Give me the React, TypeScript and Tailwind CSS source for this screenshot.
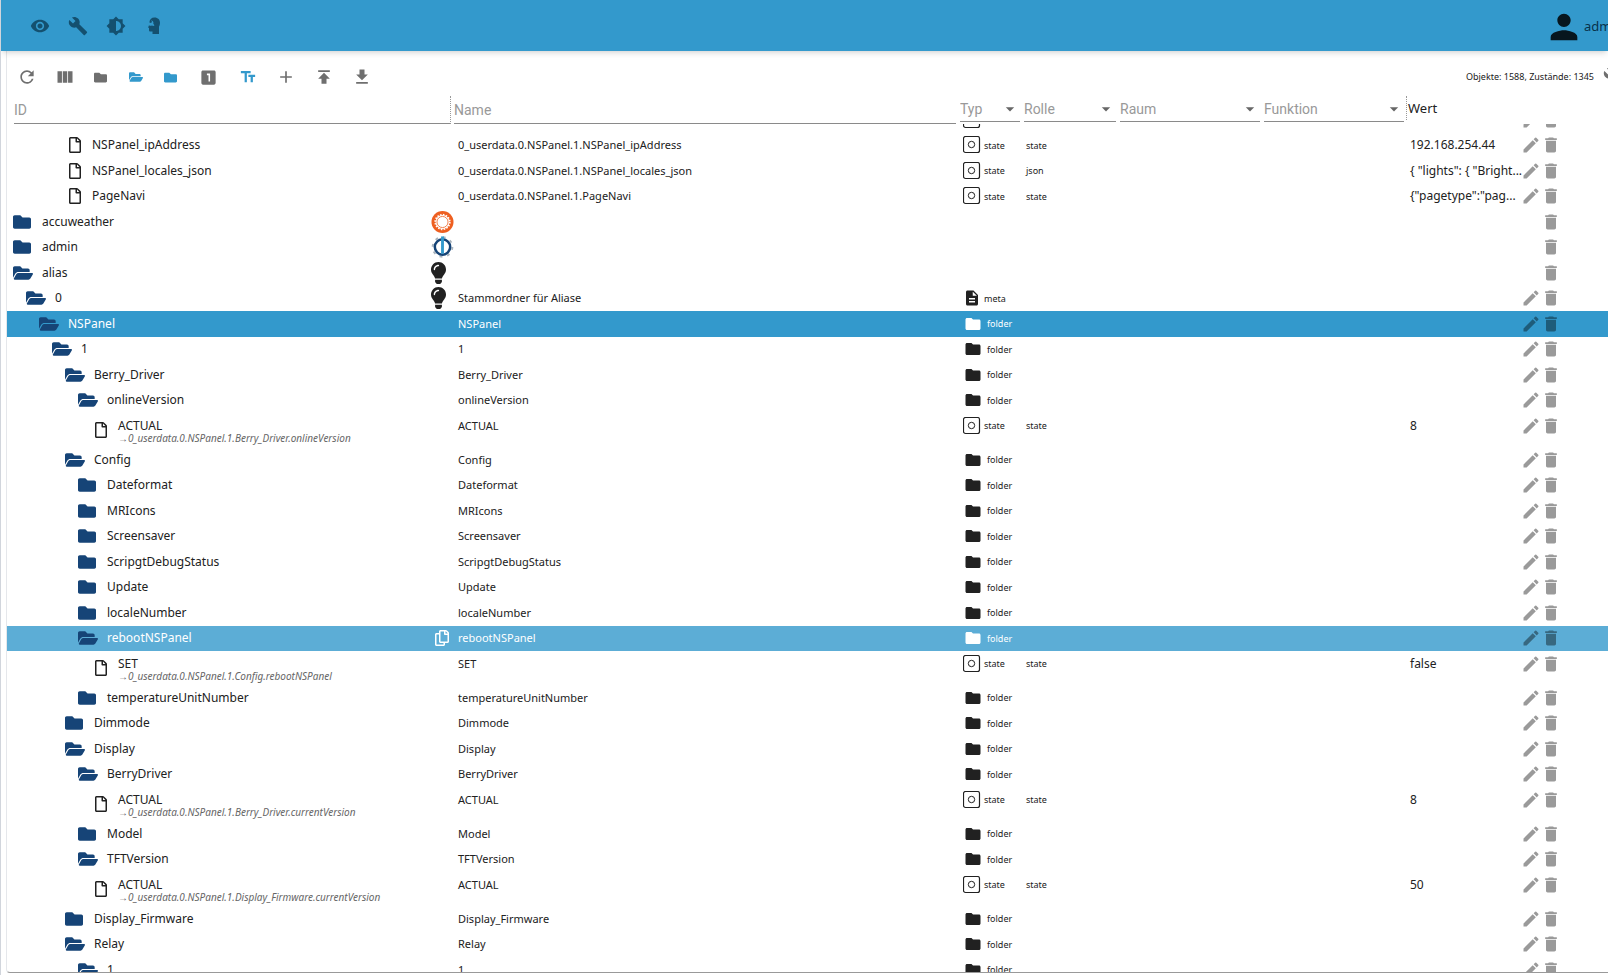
import React from "react";
import {
  FaFolder,
  FaFolderOpen,
  FaLightbulb,
  FaRegCopy,
  FaRegFile,
} from "react-icons/fa";
import {
  MdAdd,
  MdArrowDropDown,
  MdBrightness6,
  MdBuild,
  MdDelete,
  MdDescription,
  MdEdit,
  MdFolder,
  MdLooksOne,
  MdPerson,
  MdRefresh,
  MdTextFields,
  MdViewColumn,
  MdVisibility,
  MdFileDownload,
  MdPublish,
} from "react-icons/md";

type Row = {
  id: string;
  level: number;
  kind: "open" | "closed" | "file" | "none";
  name?: string;
  type?: "state" | "folder" | "meta";
  role?: string;
  value?: string;
  alias?: string;
  icon?: "sun" | "iobroker" | "bulb" | "copy";
  tone?: "selected" | "hover";
};

const closed = (id: string, level: number): Row => ({ id, level, kind: "closed", name: id, type: "folder" });
const open = (id: string, level: number): Row => ({ id, level, kind: "open", name: id, type: "folder" });
const state = (id: string, value: string, alias: string): Row => ({
  id,
  level: 6,
  kind: "file",
  name: id,
  type: "state",
  role: "state",
  value,
  alias,
});
const data = (id: string, role: string, value: string): Row => ({
  id,
  level: 4,
  kind: "file",
  name: `0_userdata.0.NSPanel.1.${id}`,
  type: "state",
  role,
  value,
});

const rows: Row[] = [
  { id: "", level: 4, kind: "none", type: "state" },
  data("NSPanel_ipAddress", "state", "192.168.254.44"),
  data("NSPanel_locales_json", "json", '{ "lights": { "Bright...'),
  data("PageNavi", "state", '{"pagetype":"pag...'),
  { id: "accuweather", level: 0, kind: "closed", icon: "sun" },
  { id: "admin", level: 0, kind: "closed", icon: "iobroker" },
  { id: "alias", level: 0, kind: "open", icon: "bulb" },
  { id: "0", level: 1, kind: "open", icon: "bulb", name: "Stammordner für Aliase", type: "meta" },
  { ...open("NSPanel", 2), tone: "selected" },
  open("1", 3),
  open("Berry_Driver", 4),
  open("onlineVersion", 5),
  state("ACTUAL", "8", "0_userdata.0.NSPanel.1.Berry_Driver.onlineVersion"),
  open("Config", 4),
  closed("Dateformat", 5),
  closed("MRIcons", 5),
  closed("Screensaver", 5),
  closed("ScripgtDebugStatus", 5),
  closed("Update", 5),
  closed("localeNumber", 5),
  { ...open("rebootNSPanel", 5), icon: "copy", tone: "hover" },
  state("SET", "false", "0_userdata.0.NSPanel.1.Config.rebootNSPanel"),
  closed("temperatureUnitNumber", 5),
  closed("Dimmode", 4),
  open("Display", 4),
  open("BerryDriver", 5),
  state("ACTUAL", "8", "0_userdata.0.NSPanel.1.Berry_Driver.currentVersion"),
  closed("Model", 5),
  open("TFTVersion", 5),
  state("ACTUAL", "50", "0_userdata.0.NSPanel.1.Display_Firmware.currentVersion"),
  closed("Display_Firmware", 4),
  open("Relay", 4),
  open("1", 5),
];

const HeadIcon = () => (
  <svg viewBox="0 0 20 20" className="size-5" fill="currentColor">
    <path d="M10.500 1.500C14 1.500 16 3.800 16 6.800c0 2-.6 3-1 4V18H8.500v-2.500H6.500c-1 0-1.500-.5-1.500-1.500v-2.200H4l1-2.600c.8.6 2 .7 2.900.2l1.600.7 1-.9-1.200-1.400c.6-1.700-.5-3.400-2.300-3.600l1 1.500-.9 1.200-1.700-.4C5.500 3.500 7.300 1.500 10.500 1.500Z" />
  </svg>
);

const SunIcon = () => (
  <svg viewBox="0 0 24 24" className="size-6">
    <circle cx="12" cy="12" r="11.500" fill="#ee5f20" />
    <circle cx="12" cy="12" r="7.200" fill="#fff" />
    <circle cx="12" cy="12" r="7.600" fill="none" stroke="#fff" strokeWidth="1.800" strokeDasharray="1.600 1.400" />
    <circle cx="12" cy="12" r="5.800" fill="#fff" stroke="#ee7a45" />
  </svg>
);

const IoBrokerIcon = () => (
  <svg viewBox="0 0 24 24" className="size-6" fill="none">
    <circle cx="12" cy="12" r="10.300" stroke="#a9b4be" strokeWidth="2" strokeDasharray="3 5.090" />
    <circle cx="12" cy="12" r="8" fill="#fff" stroke="#164477" strokeWidth="2.600" />
    <path d="M12 1v18" stroke="#3399cc" strokeWidth="3" />
  </svg>
);

const StateIcon = () => (
  <svg viewBox="0 0 18 18" className="size-[18px]" fill="none" stroke="currentColor">
    <rect x="0.500" y="0.500" width="16" height="16" rx="2" strokeWidth="1.200" />
    <circle cx="8.500" cy="8.500" r="3.200" />
  </svg>
);

const TreeIcon = ({ kind }: { kind: Row["kind"] }) => {
  if (kind === "none") return null;
  if (kind === "file") {
    return <FaRegFile className="ml-1 mr-[11px] h-4 w-3 shrink-0" />;
  }
  if (kind === "open") {
    return <FaFolderOpen className="mr-[9px] h-[18px] w-5 shrink-0 text-[#164477]" />;
  }
  return <FaFolder className="mr-[11px] size-[18px] shrink-0 text-[#164477]" />;
};

const RowIcon = ({ icon }: { icon: Row["icon"] }) => {
  if (icon === "sun") return <SunIcon />;
  if (icon === "iobroker") return <IoBrokerIcon />;
  if (icon === "bulb") return <FaLightbulb className="h-[22px] w-[15px]" />;
  if (icon === "copy") return <FaRegCopy className="ml-[3px] size-4" />;
  return null;
};

const TypeCell = ({ type }: { type: Row["type"] }) => {
  if (!type) return null;
  return (
    <>
      {type === "state" && <StateIcon />}
      {type === "meta" && <MdDescription className="size-[18px]" />}
      {type === "folder" && <MdFolder className="mr-[2px] ml-px size-[18px]" />}
      <span className="ml-[3px]">{type}</span>
    </>
  );
};

const TreeRow = ({ row }: { row: Row }) => {
  let tone = "text-[#212121]";
  if (row.tone === "selected") tone = "bg-[#3399cc] text-white";
  if (row.tone === "hover") tone = "bg-[#5cadd6] text-white";
  const height = row.alias ? "h-[34px]" : "h-[1.7em]";
  const line = "flex h-[1.7em] items-center";
  const button = row.tone ? "text-black/40" : "text-[#9a9a9a]";

  return (
    <tr className={`flex shrink-0 first:-mt-[17px] ${height} ${tone}`}>
      <td className="flex w-[447px] shrink-0">
        <div
          className={`flex min-w-0 flex-1 ${row.alias ? "items-center" : line}`}
          style={{ paddingLeft: 6 + row.level * 13 }}
        >
          <TreeIcon kind={row.kind} />
          {row.alias ? (
            <div className="pt-1 text-[12px] leading-3 whitespace-nowrap">
              {row.id}
              <div className="text-[10px] text-[#666] italic">→{row.alias}</div>
            </div>
          ) : (
            <div className="text-[12px] leading-4 whitespace-nowrap">{row.id}</div>
          )}
        </div>
        <div className={`${line} w-[23px] shrink-0`}>
          <RowIcon icon={row.icon} />
        </div>
      </td>
      <td className="min-w-0 flex-1">
        <div className={line}>
          <span className="pl-1 text-[11px]">{row.name}</span>
        </div>
      </td>
      <td className="w-16 shrink-0">
        <div className={line}>
          <span className="flex items-center pl-[3px] text-[9px]">
            <TypeCell type={row.type} />
          </span>
        </div>
      </td>
      <td className="w-24 shrink-0">
        <div className={line}>
          <span className="pl-[2px] text-[9px]">{row.role}</span>
        </div>
      </td>
      <td className="w-36 shrink-0" />
      <td className="w-36 shrink-0" />
      <td className="w-28 shrink-0">
        <div className={line}>
          <span className="pl-[2px] text-[12px] whitespace-nowrap">{row.value}</span>
        </div>
      </td>
      <td className="w-[88px] shrink-0">
        <div className={`${line} ${button}`}>
          <span className="flex w-[21px] justify-end">
            {row.type && (
              <button aria-label="Edit">
                <MdEdit className="size-5" />
              </button>
            )}
          </span>
          <button aria-label="Delete">
            <MdDelete className="size-5" />
          </button>
        </div>
      </td>
    </tr>
  );
};

const TextFilter = ({ label, className }: { label: string; className: string }) => (
  <th className={className}>
    <input
      aria-label={label}
      placeholder={label}
      className="block h-7 w-full border-b border-[#8a8a8a] font-[Roboto,sans-serif] text-sm font-normal outline-none placeholder:text-[#999]"
    />
  </th>
);

const SelectFilter = ({ label, className }: { label: string; className: string }) => (
  <th className={`relative shrink-0 pr-1 ${className}`}>
    <select
      aria-label={label}
      className="block h-[26px] w-full appearance-none border-b border-[#8a8a8a] font-[Roboto,sans-serif] text-sm font-normal text-[#999] outline-none"
    >
      <option>{label}</option>
    </select>
    <MdArrowDropDown className="pointer-events-none absolute top-[3px] right-1 size-5 text-[#666]" />
  </th>
);

const tools = [
  { label: "Refresh", icon: <MdRefresh className="size-5" />, className: "w-[38px] text-[#6f6f6f]" },
  { label: "Columns", icon: <MdViewColumn className="size-5" />, className: "w-[37px] text-[#6f6f6f]" },
  { label: "Collapse all", icon: <FaFolder className="size-[13px]" />, className: "w-[35px] text-[#6f6f6f]" },
  { label: "Expand all", icon: <FaFolderOpen className="size-[14px]" />, className: "w-[36px] text-[#3399cc]" },
  { label: "Collapse one", icon: <FaFolder className="size-[13px]" />, className: "w-[33px] text-[#3399cc]" },
  { label: "Expand one", icon: <MdLooksOne className="size-[19px]" />, className: "w-[43px] text-[#6f6f6f]" },
  { label: "Show names", icon: <MdTextFields className="size-[18px]" />, className: "w-[36px] text-[#3399cc]" },
  { label: "Add object", icon: <MdAdd className="size-5" />, className: "w-[39px] text-[#6f6f6f]" },
  { label: "Upload", icon: <MdPublish className="size-5" />, className: "w-[38px] text-[#6f6f6f]" },
  { label: "Download", icon: <MdFileDownload className="size-5" />, className: "w-[37px] text-[#6f6f6f]" },
];

const App = () => {
  return (
    <div className="flex h-screen flex-col overflow-hidden border-l border-gray-300 bg-white font-['Noto_Sans',sans-serif] text-[#212121]">
      <header className="z-10 flex h-[51px] shrink-0 items-center bg-[#3399cc] pl-[29px] shadow-md">
        <div className="flex flex-1 items-center gap-[18px] text-[#14506f]">
          <button aria-label="Visibility">
            <MdVisibility className="size-5" />
          </button>
          <button aria-label="System settings">
            <MdBuild className="size-5" />
          </button>
          <button aria-label="Theme">
            <MdBrightness6 className="size-5" />
          </button>
          <button aria-label="Expert mode">
            <HeadIcon />
          </button>
        </div>
        <button className="flex w-16 shrink-0 items-center overflow-hidden pt-[2px] text-[13px] text-[#08324a]">
          <MdPerson className="size-10 shrink-0 text-[#07161e]" />
          <span>admin</span>
        </button>
      </header>

      <main className="mb-[2px] ml-[5px] flex min-h-0 flex-1 flex-col rounded-bl border-b border-l border-b-[#999] border-l-gray-200">
        <div className="flex h-[45px] shrink-0 items-center overflow-hidden pt-[7px] pl-px">
          {tools.map((tool) => (
            <button
              key={tool.label}
              aria-label={tool.label}
              className={`flex justify-center ${tool.className}`}
            >
              {tool.icon}
            </button>
          ))}
          <span className="ml-auto mr-[9px] text-[9px]">Objekte: 1588, Zustände: 1345</span>
          <button aria-label="Tools" className="-mr-[15px] shrink-0 text-[#6f6f6f]">
            <MdBuild className="size-5" />
          </button>
        </div>

        <table className="flex min-h-0 flex-1 flex-col text-left">
          <thead>
            <tr className="flex h-7 items-start">
              <TextFilter label="ID" className="w-[443px] pl-[7px]" />
              <TextFilter label="Name" className="min-w-0 flex-1 border-l border-dotted border-[#999] pr-1 pl-[3px]" />
              <SelectFilter label="Typ" className="w-16" />
              <SelectFilter label="Rolle" className="w-24" />
              <SelectFilter label="Raum" className="w-36" />
              <SelectFilter label="Funktion" className="w-36" />
              <th className="-ml-[2px] w-[114px] border-l border-dotted border-[#999] pl-px text-[13px] leading-6 font-normal">
                Wert
              </th>
              <th className="w-[88px]" />
            </tr>
          </thead>
          <tbody className="flex min-h-0 flex-1 flex-col overflow-hidden text-[15px]">
            {rows.map((row, i) => (
              <TreeRow key={i} row={row} />
            ))}
          </tbody>
        </table>
      </main>
    </div>
  );
};

export default App;
